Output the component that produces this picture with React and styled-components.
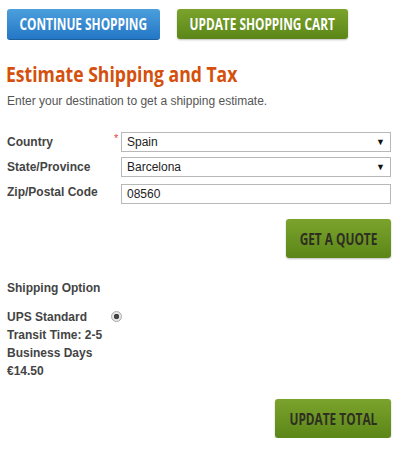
import styled, { createGlobalStyle, css } from "styled-components";

const Global = createGlobalStyle`
  body {
    margin: 0;
    background: #fff;
    font-family: "Liberation Sans", Arial, sans-serif;
    font-size: 12px;
    color: #444;
  }
`;

const Page = styled.div`
  width: 401px;
  padding: 9px 10px 0 7px;
  box-sizing: border-box;
`;

const TopBar = styled.div`
  display: flex;
  gap: 17px;
`;

const Button = styled.button`
  border: none;
  border-radius: 3px;
  cursor: pointer;
  padding: 0;
  display: flex;
  align-items: center;
  justify-content: center;
  width: ${(p) => p.$w}px;
  height: ${(p) => p.$h}px;
  ${(p) =>
    p.$blue
      ? css`
          color: #fff;
          background: linear-gradient(#4c9fdc, #2377c5);
          border-bottom: 1px solid #1b5f9f;
        `
      : css`
          color: ${p.$light ? "#fff" : "#2e2e22"};
          background: linear-gradient(#7ba32c, #5b8618);
          box-shadow: 0 1px 2px rgba(0, 0, 0, 0.25);
        `}
`;

const Condensed = styled.span`
  display: inline-block;
  white-space: nowrap;
  font-family: "Open Sans", sans-serif;
  font-weight: bold;
  font-size: ${(p) => p.$size || 16}px;
  text-transform: uppercase;
  transform: scaleX(0.74);
  transform-origin: ${(p) => (p.$left ? "left" : "center")};
`;

const Heading = styled.h1`
  margin: 18px 0 0 -1px;
  color: #d4500c;
  line-height: 30px;
  font-weight: bold;
`;

const HeadingText = styled(Condensed)`
  text-transform: none;
  font-size: 22px;
  transform: scaleX(0.8);
`;

const Intro = styled.p`
  margin: 5px 0 0;
  color: #555;
  font-size: 12px;
`;

const Form = styled.div`
  margin-top: 24px;
  display: grid;
  grid-template-columns: 107px 7px 270px;
  row-gap: 5px;
  align-items: center;
`;

const Label = styled.label`
  font-weight: bold;
  color: #444;
  font-size: 12px;
  align-self: start;
  padding-top: 3px;
`;

const Star = styled.span`
  color: #e0463a;
  font-size: 11px;
  align-self: start;
`;

const Field = styled.div`
  height: 20px;
  border: 1px solid #b8b8b8;
  box-sizing: border-box;
  display: flex;
  align-items: center;
  justify-content: space-between;
  padding: 0 5px;
  font-size: 12px;
  color: #222;
  margin-top: ${(p) => p.$mt || 0}px;
`;

const Arrow = styled.span`
  font-size: 9px;
  color: #111;
`;

const RightRow = styled.div`
  display: flex;
  justify-content: flex-end;
  margin-top: ${(p) => p.$mt}px;
`;

const SectionLabel = styled.div`
  margin-top: 23px;
  font-weight: bold;
  color: #444;
`;

const OptionRow = styled.div`
  margin-top: 13px;
  display: flex;
  align-items: flex-start;
`;

const OptionText = styled.div`
  width: 104px;
  font-weight: bold;
  color: #444;
  line-height: 18px;
`;

const Radio = styled.span`
  margin-top: 3px;
  width: 11px;
  height: 11px;
  border-radius: 50%;
  border: 1px solid #aaa;
  background: radial-gradient(circle, #444 0 2.5px, #e6e6e6 3px);
  box-sizing: border-box;
`;

export default function App() {
  return (
    <Page>
      <Global />
      <TopBar>
        <Button $blue $w={153} $h={31}>
          <Condensed>Continue Shopping</Condensed>
        </Button>
        <Button $light $w={171} $h={30}>
          <Condensed>Update Shopping Cart</Condensed>
        </Button>
      </TopBar>

      <Heading>
        <HeadingText $left>Estimate Shipping and Tax</HeadingText>
      </Heading>
      <Intro>Enter your destination to get a shipping estimate.</Intro>

      <Form>
        <Label>Country</Label>
        <Star>*</Star>
        <Field>
          Spain <Arrow>▼</Arrow>
        </Field>
        <Label>State/Province</Label>
        <span />
        <Field>
          Barcelona <Arrow>▼</Arrow>
        </Field>
        <Label>Zip/Postal Code</Label>
        <span />
        <Field $mt={2}>08560</Field>
      </Form>

      <RightRow $mt={15}>
        <Button $w={105} $h={39}>
          <Condensed>Get a Quote</Condensed>
        </Button>
      </RightRow>

      <SectionLabel>Shipping Option</SectionLabel>
      <OptionRow>
        <OptionText>
          UPS Standard
          <br />
          Transit Time: 2-5 Business Days
          <br />
          €14.50
        </OptionText>
        <Radio />
      </OptionRow>

      <RightRow $mt={19}>
        <Button $w={116} $h={39}>
          <Condensed>Update Total</Condensed>
        </Button>
      </RightRow>
    </Page>
  );
}
